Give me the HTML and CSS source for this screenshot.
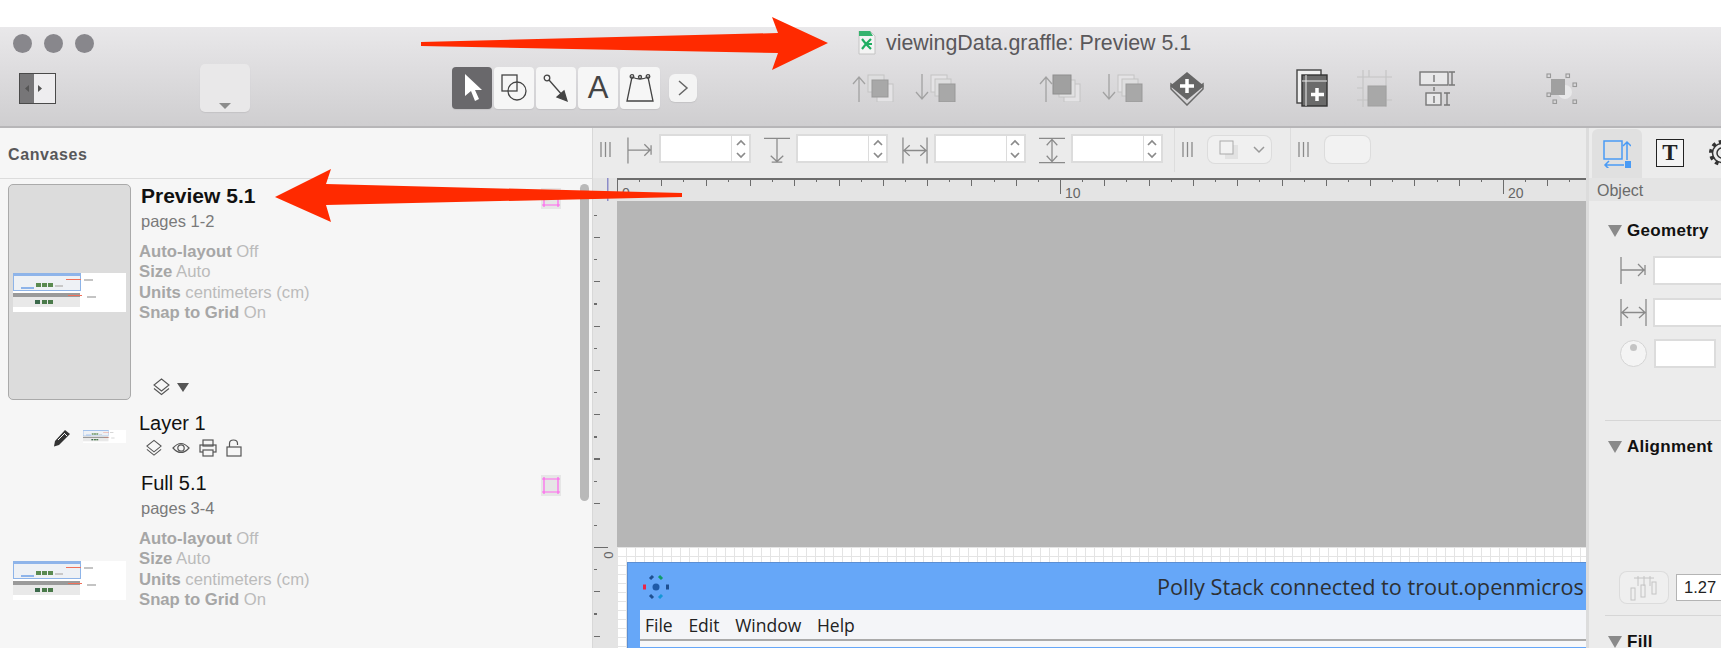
FILE: index.html
```html
<!DOCTYPE html>
<html lang="en">
<head>
  <meta charset="UTF-8">
  <title>viewingData.graffle: Preview 5.1</title>
  <link rel="stylesheet" href="styles.css">
</head>
<body>
  <!-- shared icons -->
  <svg class="defs" width="0" height="0">
    <symbol id="grip" viewBox="0 0 11 15">
      <path d="M1 0v15M5.500 0v15M10 0v15" stroke="#8a8a8a" stroke-width="1.300" fill="none"/>
    </symbol>
    <symbol id="step" viewBox="0 0 12 22">
      <path d="M2 7l4-4 4 4M2 15l4 4 4-4" stroke="#8a8a8a" stroke-width="1.700" fill="none"/>
    </symbol>
    <symbol id="x-pos" viewBox="0 0 27 27">
      <path d="M1 0v27M1 13h24M18 7l6 6-6 6M25 8v10" stroke="#8a8a8a" stroke-width="1.300" fill="none"/>
    </symbol>
    <symbol id="y-pos" viewBox="0 0 27 27">
      <path d="M0 1h27M13.500 1v24M7 19l6.500 6 6.500-6M8 25.500h11" stroke="#8a8a8a" stroke-width="1.300" fill="none"/>
    </symbol>
    <symbol id="width" viewBox="0 0 27 27">
      <path d="M1 0v27M26 0v27M2 13.500h23M8 8l-6 5.500 6 5.500M19 8l6 5.500-6 5.500" stroke="#8a8a8a" stroke-width="1.300" fill="none"/>
    </symbol>
    <symbol id="height" viewBox="0 0 27 27">
      <path d="M0 1h27M0 26h27M13.500 2v23M8 8l5.500-6 5.500 6M8 19l5.500 6 5.500-6" stroke="#8a8a8a" stroke-width="1.300" fill="none"/>
    </symbol>
    <symbol id="layers" viewBox="0 0 19 18">
      <path d="M9.500 1l7.500 6-7.500 6L2 7z" fill="none" stroke="#555" stroke-width="1.100"/>
      <path d="M2 10.500l7.500 6 7.500-6" fill="none" stroke="#555" stroke-width="1.100"/>
    </symbol>
    <symbol id="stack-up" viewBox="0 0 42 28">
      <path d="M7 28V4M1 10l6-7 6 7" stroke="#a2a2a2" stroke-width="1.300" fill="none"/>
      <rect x="25" y="10" width="16" height="18" fill="#e4e3e5" stroke="#c4c4c4"/>
      <rect x="16" y="1" width="16" height="17" fill="#dededf" stroke="#c4c4c4"/>
      <rect x="20" y="6" width="16" height="17" fill="#a8a8a8" stroke="#999"/>
    </symbol>
    <symbol id="stack-front" viewBox="0 0 42 28">
      <path d="M7 28V4M1 10l6-7 6 7" stroke="#a2a2a2" stroke-width="1.300" fill="none"/>
      <rect x="25" y="10" width="16" height="18" fill="#e4e3e5" stroke="#c4c4c4"/>
      <rect x="20" y="6" width="16" height="17" fill="#e0e0e1" stroke="#c4c4c4"/>
      <rect x="14" y="1" width="18" height="19" fill="#a0a0a0" stroke="#8e8e8e"/>
    </symbol>
    <symbol id="stack-down" viewBox="0 0 42 28">
      <path d="M7 0v24M1 18l6 7 6-7" stroke="#a2a2a2" stroke-width="1.300" fill="none"/>
      <rect x="16" y="1" width="16" height="17" fill="#e4e3e5" stroke="#c4c4c4"/>
      <rect x="20" y="5" width="16" height="17" fill="#dededf" stroke="#c4c4c4"/>
      <rect x="24" y="10" width="16" height="18" fill="#a8a8a8" stroke="#999"/>
    </symbol>
    <symbol id="mini-doc" viewBox="0 0 113 39">
      <rect width="113" height="39" fill="#fff"/>
      <rect x="0.500" y="0.500" width="67" height="17" fill="#eef1f5" stroke="#8eb4e8"/>
      <rect x="1" y="1" width="66" height="2" fill="#8eb4ea"/>
      <rect x="8" y="14" width="13" height="2" fill="#8eb4ea"/>
      <rect x="23" y="10" width="5" height="4" fill="#5a8a50"/>
      <rect x="29" y="10" width="5" height="4" fill="#5a8a50"/>
      <rect x="35" y="10" width="5" height="4" fill="#5a8a50"/>
      <rect x="42" y="12" width="8" height="2" fill="#c8c8c8"/>
      <rect x="53" y="6" width="15" height="1" fill="#f0705a"/>
      <rect x="71" y="6" width="9" height="2" fill="#c4c4c4"/>
      <rect x="0" y="20" width="67" height="4" fill="#9a9a9a"/>
      <rect x="0" y="24" width="67" height="10" fill="#e9e9e9"/>
      <rect x="22" y="27" width="5" height="4" fill="#3c6a4c"/>
      <rect x="29" y="27" width="5" height="4" fill="#4a7a4a"/>
      <rect x="35" y="27" width="5" height="4" fill="#4a7a4a"/>
      <rect x="55" y="22" width="14" height="1" fill="#f0705a"/>
      <rect x="74" y="23" width="9" height="2" fill="#c4c4c4"/>
    </symbol>
    <symbol id="pink" viewBox="0 0 20 21">
      <rect width="20" height="21" fill="#e6e6e6"/>
      <path d="M3 2v17M17 2v17M1 4h18M1 17h18" stroke="#ff66ee" stroke-width="1.200" fill="none"/>
    </symbol>
  </svg>

  <div class="page">
    <div class="top-gap"></div>

    <header class="toolbar">
      <div class="title-row">
        <div class="dots"><i></i><i></i><i></i></div>
        <div class="doc-title">
          <svg width="18" height="24" viewBox="0 0 18 24">
            <path d="M1 0h11l5 5v18H1z" fill="#f4f4f4" stroke="#c4c4c4"/>
            <path d="M1 0h11l3 5H1z" fill="#35b36e"/>
            <path d="M4 8l4 5-4 5M13 8l-5 5 5 5M8 13h6" stroke="#1fae62" stroke-width="2.200" fill="none"/>
          </svg>
          <span>viewingData.graffle: Preview 5.1</span>
        </div>
      </div>

      <div class="tool-row">
        <div class="side-toggle"><b></b>
          <svg width="37" height="31" viewBox="0 0 37 31"><path d="M10 12l-4 3.500 4 3.500zM19 12l4 3.500-4 3.500z" fill="#555"/></svg>
        </div>
        <div class="style-btn"><i></i></div>

        <div class="tools">
          <div class="tool active">
            <svg width="24" height="32" viewBox="0 0 24 32"><path d="M5 2v22l6-5 4 10 4-2-4-9h7z" fill="#fff"/></svg>
          </div>
          <div class="tool">
            <svg width="28" height="32" viewBox="0 0 28 32" fill="none" stroke="#444" stroke-width="1.300"><rect x="2" y="3" width="15" height="16"/><circle cx="17" cy="19" r="9"/></svg>
          </div>
          <div class="tool">
            <svg width="28" height="32" viewBox="0 0 28 32" fill="none" stroke="#444" stroke-width="1.300"><circle cx="5" cy="6" r="2.800"/><path d="M7 8l14 16"/><path d="M25 29l-10-4 7-6z" fill="#444"/></svg>
          </div>
          <div class="tool tool-a">A</div>
          <div class="tool">
            <svg width="30" height="32" viewBox="0 0 30 32" fill="none" stroke="#444" stroke-width="1.300"><path d="M7 5Q15 9 23 5L28 29H2z"/><circle cx="7" cy="4.500" r="1.800"/><circle cx="23" cy="4.500" r="1.800"/><circle cx="15" cy="5" r="1.500"/></svg>
          </div>
        </div>
        <div class="more-btn">
          <svg width="12" height="18" viewBox="0 0 12 18"><path d="M2 2l8 7-8 7" stroke="#666" stroke-width="1.500" fill="none"/></svg>
        </div>

        <svg class="order first" width="42" height="28"><use href="#stack-up"/></svg>
        <svg class="order second" width="42" height="28"><use href="#stack-down"/></svg>
        <svg class="order third" width="42" height="28"><use href="#stack-front"/></svg>
        <svg class="order second" width="42" height="28"><use href="#stack-down"/></svg>

        <svg class="group-btn" width="38" height="35" viewBox="0 0 38 35">
          <path d="M19 24l16-11v5L19 34 3 18v-5z" fill="none" stroke="#6a6a6a" stroke-width="1.500"/>
          <path d="M19 1l17 14-17 14L2 15z" fill="#666"/>
          <path d="M19 8v14M12 15h14" stroke="#fff" stroke-width="3.500"/>
        </svg>
        <svg class="new-canvas" width="32" height="38" viewBox="0 0 32 38">
          <rect x="1" y="1" width="24" height="33" fill="#f0f0f0" stroke="#444" stroke-width="1.400"/>
          <rect x="6" y="6" width="25" height="31" fill="#6b6b6b" stroke="#333" stroke-width="1.400"/>
          <path d="M6 12h25M10 6v31" stroke="#eee" stroke-width="1"/>
          <path d="M21 19v13M15 25.500h13" stroke="#fff" stroke-width="3.500"/>
        </svg>
        <svg class="grid-btn" width="37" height="37" viewBox="0 0 37 37">
          <path d="M1 7h35M1 30h35M7 0v37M30 0v37M1 18h6M13 0v7" stroke="#c4c4c4" stroke-width="1.100" fill="none"/>
          <rect x="12" y="16" width="18" height="20" fill="#a8a8a8" stroke="#a0a0a0"/>
        </svg>
        <svg class="split-btn" width="37" height="35" viewBox="0 0 37 35" fill="#e8e8e9" stroke="#777" stroke-width="1.400">
          <rect x="1" y="1" width="28" height="13"/>
          <rect x="7" y="22" width="15" height="12"/>
          <path d="M15 4v7M15 25v7M15 16v4M33 1v13M30 1h6M30 14h6M28 22v12M25 22h6M25 34h6" fill="none"/>
        </svg>
        <svg class="focus-btn" width="32" height="31" viewBox="0 0 32 31">
          <circle cx="19" cy="19" r="7" fill="#e8e8e9"/>
          <rect x="5" y="6" width="14" height="16" fill="#a0a0a0"/>
          <g fill="none" stroke="#999" stroke-width="1.100">
            <rect x="1" y="1" width="3.500" height="3.500"/><rect x="20" y="1" width="3.500" height="3.500"/>
            <rect x="27" y="10" width="3.500" height="3.500"/><rect x="1" y="20" width="3.500" height="3.500"/>
            <rect x="7" y="27" width="3.500" height="3.500"/><rect x="27" y="27" width="3.500" height="3.500"/>
          </g>
        </svg>
      </div>
    </header>

    <div class="main">
      <aside class="sidebar">
        <div class="side-head">Canvases</div>
        <div class="scroller"></div>
        <div class="side-list">

          <div class="canvas-item">
            <div class="thumb selected"><svg width="113" height="39"><use href="#mini-doc"/></svg></div>
            <div class="info">
              <div class="name strong">Preview 5.1</div>
              <div class="pages">pages 1-2</div>
              <ul class="props">
                <li><b>Auto-layout</b> Off</li>
                <li><b>Size</b> Auto</li>
                <li><b>Units</b> centimeters (cm)</li>
                <li><b>Snap to Grid</b> On</li>
              </ul>
              <div class="layer-toggle">
                <svg width="19" height="18"><use href="#layers"/></svg>
                <i class="caret"></i>
              </div>
            </div>
            <svg class="pink" width="20" height="21"><use href="#pink"/></svg>
          </div>

          <div class="layer-item">
            <svg class="pencil" width="18" height="18" viewBox="0 0 18 18">
              <path d="M12 1l5 4L6 16l-5 1.500L2 12z" fill="#333"/>
              <path d="M11 4l3 3M5 11l6-6" stroke="#f6f6f6" stroke-width="1"/>
            </svg>
            <svg class="layer-thumb" width="43" height="13" viewBox="0 0 113 39" preserveAspectRatio="none"><use href="#mini-doc"/></svg>
            <div class="info">
              <div class="name layer-name">Layer 1</div>
              <div class="layer-icons">
                <svg width="18" height="18"><use href="#layers"/></svg>
                <svg width="18" height="18" viewBox="0 0 18 18" fill="none" stroke="#555" stroke-width="1.200"><path d="M1 9q8-9 16 0-8 9-16 0z"/><circle cx="9" cy="9" r="3.200"/></svg>
                <svg width="18" height="18" viewBox="0 0 18 18" fill="none" stroke="#555" stroke-width="1.200"><rect x="4" y="1" width="10" height="6"/><rect x="1" y="6" width="16" height="7"/><rect x="4" y="11" width="10" height="6" fill="#f6f6f6"/></svg>
                <svg width="16" height="18" viewBox="0 0 16 18" fill="none" stroke="#555" stroke-width="1.200"><rect x="1" y="8" width="14" height="9"/><path d="M3.500 8V4.500q0-3.500 4-3.500t4 3.500V6"/></svg>
              </div>
            </div>
          </div>

          <div class="canvas-item next">
            <div class="thumb"><svg width="113" height="39"><use href="#mini-doc"/></svg></div>
            <div class="info">
              <div class="name">Full 5.1</div>
              <div class="pages">pages 3-4</div>
              <ul class="props">
                <li><b>Auto-layout</b> Off</li>
                <li><b>Size</b> Auto</li>
                <li><b>Units</b> centimeters (cm)</li>
                <li><b>Snap to Grid</b> On</li>
              </ul>
            </div>
            <svg class="pink" width="20" height="21"><use href="#pink"/></svg>
          </div>
        </div>
      </aside>

      <section class="center">
        <div class="insp-bar">
          <svg class="grip" width="11" height="15"><use href="#grip"/></svg>
          <div class="field-group">
            <svg width="26" height="27"><use href="#x-pos"/></svg>
            <div class="field"><span class="stepper"><svg width="12" height="22"><use href="#step"/></svg></span></div>
          </div>
          <div class="field-group">
            <svg width="26" height="27"><use href="#y-pos"/></svg>
            <div class="field"><span class="stepper"><svg width="12" height="22"><use href="#step"/></svg></span></div>
          </div>
          <div class="field-group">
            <svg width="26" height="27"><use href="#width"/></svg>
            <div class="field"><span class="stepper"><svg width="12" height="22"><use href="#step"/></svg></span></div>
          </div>
          <div class="field-group">
            <svg width="26" height="27"><use href="#height"/></svg>
            <div class="field"><span class="stepper"><svg width="12" height="22"><use href="#step"/></svg></span></div>
          </div>
          <div class="bar-sep"></div>
          <svg class="grip near" width="11" height="15"><use href="#grip"/></svg>
          <div class="shadow-select">
            <svg width="20" height="20" viewBox="0 0 20 20"><rect x="6" y="5" width="13" height="14" fill="#e2e2e2"/><rect x="1" y="1" width="13" height="13" fill="#f2f2f2" stroke="#aaa"/></svg>
            <svg width="12" height="8" viewBox="0 0 12 8"><path d="M1 1l5 5 5-5" stroke="#999" stroke-width="1.500" fill="none"/></svg>
          </div>
          <div class="bar-sep wide"></div>
          <svg class="grip near" width="11" height="15"><use href="#grip"/></svg>
          <div class="round-btn"></div>
        </div>

        <div class="h-ruler-row">
          <div class="ruler-corner"></div>
          <div class="h-ruler">
            <span>0</span><span>10</span><span>20</span>
          </div>
        </div>

        <div class="work">
          <div class="v-ruler">
            <div class="v-zero"><span>0</span></div>
          </div>
          <div class="sheet-col">
            <div class="backdrop"></div>
            <div class="sheet">
              <div class="app-window">
                <div class="app-head">
                  <svg width="28" height="26" viewBox="0 0 28 26">
                    <circle cx="14" cy="13" r="3.500" fill="#1f5aa8"/>
                    <path d="M2.500 10.500v5" stroke="#e8264a" stroke-width="3"/>
                    <path d="M25.500 10.500v5" stroke="#1f4f90" stroke-width="3"/>
                    <path d="M17 2l3 3" stroke="#0f9a68" stroke-width="3"/>
                    <path d="M11 2L8 5" stroke="#1f4f90" stroke-width="3"/>
                    <path d="M8 21l3 3" stroke="#1f4f90" stroke-width="3"/>
                    <path d="M20 21l-3 3" stroke="#1596d6" stroke-width="3"/>
                  </svg>
                  <span class="app-title">Polly Stack connected to trout.openmicros</span>
                </div>
                <nav class="app-menu">
                  <span>File</span><span>Edit</span><span>Window</span><span>Help</span>
                </nav>
                <div class="app-body"></div>
              </div>
            </div>
          </div>
        </div>
      </section>

      <aside class="inspector">
        <div class="tabs">
          <div class="tab active">
            <svg width="28" height="28" viewBox="0 0 28 28" fill="none" stroke="#4a9bf5" stroke-width="1.500">
              <rect x="1" y="1" width="18" height="18"/>
              <path d="M24 20V2M20 6l4-4 4 4M21 25H2M6 21l-4 4 4 4"/>
              <rect x="22" y="21" width="6" height="7" fill="#4a9bf5" stroke="none"/>
            </svg>
          </div>
          <div class="tab-t">T</div>
          <svg class="gear" width="28" height="28" viewBox="0 0 28 28" fill="none" stroke="#333">
            <circle cx="14" cy="14" r="11" stroke-width="4" stroke-dasharray="3.500 3.400"/>
            <circle cx="14" cy="14" r="9.500" stroke-width="1.500"/>
            <circle cx="14" cy="14" r="5" stroke-width="1.500"/>
          </svg>
        </div>
        <div class="insp-label">Object</div>

        <div class="insp-head geometry"><i class="tri"></i>Geometry</div>
        <div class="insp-row first-row">
          <svg width="27" height="27"><use href="#x-pos"/></svg>
          <div class="insp-field"></div>
        </div>
        <div class="insp-row">
          <svg width="27" height="27"><use href="#width"/></svg>
          <div class="insp-field"></div>
        </div>
        <div class="insp-row tight">
          <div class="knob"></div>
          <div class="insp-field short"></div>
        </div>
        <div class="insp-line after-geo"></div>

        <div class="insp-head"><i class="tri"></i>Alignment</div>
        <div class="insp-row spacing">
          <div class="space-btn">
            <svg width="30" height="26" viewBox="0 0 30 26" fill="none" stroke="#c4c4c4"><path d="M5 3h20M9 1v10M15 1v10M21 1v10"/><rect x="2" y="13" width="4" height="12"/><rect x="12" y="10" width="4" height="12"/><rect x="23" y="7" width="4" height="12"/></svg>
          </div>
          <div class="insp-field value">1.27</div>
        </div>
        <div class="insp-line"></div>

        <div class="insp-head"><i class="tri"></i>Fill</div>
      </aside>
    </div>

    <!-- red annotation arrows drawn over the window -->
    <svg class="arrows" width="1721" height="648" viewBox="0 0 1721 648">
      <path d="M421 42L778 33L772 17L828 43L772 70L778 53L421 46z" fill="#ff2a00"/>
      <path d="M682 193L326 184L331 169L275 197L331 222L326 205L682 197z" fill="#ff2a00"/>
    </svg>
  </div>
</body>
</html>
```

FILE: styles.css
```css
* {
  box-sizing: border-box;
}

body {
  margin: 0;
  background: #fff;
  font-family: "Liberation Sans", Arial, sans-serif;
  color: #333;
}

.defs {
  position: absolute;
}

svg {
  display: block;
  flex: none;
}

.page {
  position: relative;
  width: 1721px;
  height: 648px;
  overflow: hidden;
}

.top-gap {
  height: 27px;
}

/* title bar and toolbar */
.toolbar {
  height: 101px;
  background: linear-gradient(#e9e8ea, #cfced0);
  border-bottom: 2px solid #b7b6b8;
}

.title-row {
  display: flex;
  align-items: center;
  height: 32px;
  padding-left: 12.5px;
}

.dots {
  display: flex;
  gap: 12px;
}

.dots i {
  width: 19px;
  height: 19px;
  border-radius: 50%;
  background: #88878c;
}

.doc-title {
  display: flex;
  align-items: center;
  gap: 10px;
  margin-left: 764.5px;
  font-size: 21.400px;
  color: #5a585b;
}

.tool-row {
  display: flex;
  align-items: center;
  height: 48px;
  margin-top: 5px;
  padding-left: 19px;
}

.side-toggle {
  position: relative;
  display: flex;
  width: 37px;
  height: 31px;
  border: 1px solid #4a4a4a;
  background: #eeedef;
}

.side-toggle b {
  width: 14px;
  background: #777678;
}

.side-toggle svg {
  position: absolute;
  left: -1px;
  top: -1px;
}

.style-btn {
  position: relative;
  width: 50px;
  height: 48px;
  margin-left: 144px;
  border-radius: 5px;
  background: #e9e8e9;
  box-shadow: 0 1px 1px #c4c3c5;
}

.style-btn i {
  position: absolute;
  left: 19px;
  bottom: 3px;
  border-left: 6px solid transparent;
  border-right: 6px solid transparent;
  border-top: 6px solid #8c8c8c;
}

.tools {
  display: flex;
  gap: 2px;
  margin-left: 202px;
}

.tool {
  display: flex;
  align-items: center;
  justify-content: center;
  width: 40px;
  height: 42px;
  border-radius: 4px;
  background: #f6f6f6;
  box-shadow: 0 1px 1px #c4c3c5;
}

.tool.active {
  background: #69686b;
}

.tool-a {
  font-size: 31px;
  color: #444;
}

.more-btn {
  display: flex;
  align-items: center;
  justify-content: center;
  width: 28px;
  height: 28px;
  margin-left: 9px;
  border-radius: 6px;
  background: #f4f4f4;
  box-shadow: 0 1px 1px #c4c3c5;
}

.order.first {
  margin-left: 155px;
}

.order.second {
  margin-left: 21px;
}

.order.third {
  margin-left: 82px;
}

.group-btn {
  margin-left: 24px;
}

.new-canvas {
  margin-left: 90px;
}

.grid-btn {
  margin-left: 28px;
}

.split-btn {
  margin-left: 26px;
}

.focus-btn {
  margin-left: 90px;
}

/* window body */
.main {
  display: flex;
  height: 520px;
}

.sidebar {
  position: relative;
  flex: none;
  width: 593px;
  background: #f6f6f6;
  border-right: 1px solid #d8d8d8;
}

.side-head {
  display: flex;
  align-items: center;
  height: 51px;
  padding: 4px 0 0 8px;
  border-bottom: 1px solid #dcdcdc;
  font-size: 16px;
  font-weight: bold;
  letter-spacing: 0.6px;
  color: #58585a;
}

.scroller {
  position: absolute;
  left: 580px;
  top: 56px;
  width: 9px;
  height: 317px;
  border-radius: 5px;
  background: #b9b9b9;
}

.side-list {
  padding: 5px 31px 0 8px;
}

.canvas-item {
  display: flex;
}

.canvas-item.next {
  margin-top: 14px;
}

.thumb {
  display: flex;
  align-items: center;
  justify-content: center;
  width: 123px;
  height: 216px;
  margin-right: 8px;
  border-radius: 5px;
}

.canvas-item.next .thumb {
  height: 218px;
}

.thumb.selected {
  background: #dcdcdc;
  border: 1px solid #aaa;
}

.info {
  flex: 1;
}

.name {
  height: 24px;
  padding-left: 2px;
  font-size: 20px;
  line-height: 24px;
  color: #111;
}

.name.strong {
  font-size: 21px;
  font-weight: bold;
}

.name.layer-name {
  padding-left: 0;
}

.pages {
  margin-top: 2px;
  padding-left: 2px;
  font-size: 16.500px;
  line-height: 22px;
  color: #7a7a7a;
}

.props {
  margin: 10px 0 0;
  padding: 0;
  list-style: none;
  font-size: 16.700px;
  line-height: 20.300px;
  color: #bbb;
}

.props b {
  color: #a6a6a6;
}

.layer-toggle {
  display: flex;
  align-items: center;
  gap: 6px;
  margin: 55px 0 0 13px;
}

.caret {
  border-left: 6px solid transparent;
  border-right: 6px solid transparent;
  border-top: 9px solid #555;
}

.pink {
  margin-top: 4px;
}

.layer-item {
  display: flex;
  margin-top: 11px;
  padding-left: 45px;
}

.pencil {
  margin-top: 18px;
}

.layer-thumb {
  margin: 19px 13px 0 12px;
}

.layer-icons {
  display: flex;
  gap: 9px;
  margin: 4px 0 0 6px;
}

/* inspector strip above the canvas */
.center {
  display: flex;
  flex-direction: column;
  flex: none;
  width: 993px;
}

.insp-bar {
  display: flex;
  flex: none;
  align-items: flex-start;
  height: 50px;
  padding: 6px 0 0 7px;
  background: #ebebeb;
}

.grip {
  margin-top: 8px;
}

.grip.near {
  margin-left: 7px;
}

.field-group {
  display: flex;
  flex: none;
  gap: 6px;
  width: 137.300px;
}

.grip + .field-group {
  margin-left: 16px;
}

.field-group svg {
  margin-top: 3px;
}

.field {
  display: flex;
  flex: none;
  justify-content: flex-end;
  width: 92px;
  height: 29px;
  background: #fff;
  border: 2px solid #dcdcdc;
}

.stepper {
  display: flex;
  align-items: center;
  justify-content: center;
  width: 18px;
  border-left: 1px solid #dcdcdc;
}

.stepper svg {
  margin-top: 0;
}

.bar-sep {
  flex: none;
  width: 1px;
  height: 44px;
  margin: -6px 0 0 -2px;
  background: #dddddd;
}

.bar-sep.wide {
  margin-left: 19px;
}

.shadow-select {
  display: flex;
  flex: none;
  align-items: center;
  justify-content: space-between;
  width: 63px;
  height: 27px;
  margin: 2px 0 0 15px;
  padding: 0 6px 0 11px;
  border-radius: 7px;
  background: #f0f0f0;
  box-shadow: 0 0 0 1px #dcdcdc;
}

.round-btn {
  flex: none;
  width: 45px;
  height: 27px;
  margin: 2px 0 0 16px;
  border-radius: 7px;
  background: #f2f2f2;
  box-shadow: 0 0 0 1px #dcdcdc;
}

/* rulers */
.h-ruler-row {
  display: flex;
  flex: none;
  height: 23px;
  background: #e4e4e4;
}

.ruler-corner {
  flex: none;
  width: 24px;
  background: linear-gradient(#8c8cc8, #8c8cc8) 14px 0 / 1.500px 100% no-repeat;
}

.h-ruler {
  display: flex;
  flex: 1;
  min-width: 0;
  overflow: hidden;
  border-top: 2px solid #6c6c6c;
  background:
    repeating-linear-gradient(90deg, #6c6c6c 0 1px, transparent 1px 44.300px) 0 0 / 100% 6px no-repeat,
    repeating-linear-gradient(90deg, #6c6c6c 0 1px, transparent 1px 22.150px) 0 0 / 100% 2px no-repeat;
}

.h-ruler span {
  flex: none;
  width: 443px;
  height: 14px;
  padding: 6px 0 0 4px;
  border-left: 1.500px solid #6c6c6c;
  font-size: 14px;
  line-height: 14px;
  color: #666;
}

.work {
  display: flex;
  flex: 1;
  min-height: 0;
}

.v-ruler {
  flex: none;
  width: 24px;
  background:
    repeating-linear-gradient(180deg, transparent 0 35.900px, #6c6c6c 35.900px 37px, transparent 37px 44.300px) 1px 0 / 6px 100% no-repeat,
    repeating-linear-gradient(180deg, transparent 0 13.750px, #6c6c6c 13.750px 15px, transparent 15px 44.300px) 1px 0 / 3px 100% no-repeat,
    #e4e4e4;
}

.v-zero {
  height: 16px;
  margin: 346px 0 0 1px;
  width: 14px;
  border-top: 1.500px solid #6c6c6c;
  font-size: 13px;
  line-height: 13px;
  color: #666;
}

.v-zero span {
  display: block;
  transform: translate(10px, 1px) rotate(90deg);
  width: 8px;
}

.sheet-col {
  display: flex;
  flex-direction: column;
  flex: 1;
  min-width: 0;
}

.backdrop {
  flex: none;
  height: 346px;
  background: #b6b6b6;
}

.sheet {
  flex: 1;
  min-height: 0;
  overflow: hidden;
  padding: 15px 0 0 10px;
  background:
    repeating-linear-gradient(90deg, #e4e4e4 0 1px, transparent 1px 9px),
    repeating-linear-gradient(180deg, #e4e4e4 0 1px, transparent 1px 9px),
    #fff;
}

.app-window {
  height: 100%;
  padding-left: 12px;
  background: #66a7f8;
  border-top: 1px solid #5b8fd4;
  border-left: 1px solid #5b8fd4;
}

.app-head {
  display: flex;
  align-items: center;
  height: 47px;
  margin-left: -12px;
  padding-left: 14px;
  white-space: nowrap;
  overflow: hidden;
}

.app-title {
  margin-left: 487px;
  font-family: "Open Sans", sans-serif;
  font-size: 21.700px;
  color: #2d3033;
}

.app-menu {
  display: flex;
  gap: 15.700px;
  height: 31px;
  padding: 3px 0 0 5px;
  background: #f4f5f8;
  border-bottom: 2px solid #aaa;
  font-family: "Open Sans", sans-serif;
  font-size: 17.500px;
  color: #222;
}

.app-body {
  height: 6px;
  background: #f7f8fa;
}

/* right panel */
.inspector {
  flex: 1;
  min-width: 0;
  overflow: hidden;
  background: #ececec;
  border-left: 3px solid #dcdcdc;
}

.tabs {
  display: flex;
  align-items: center;
  height: 50px;
  padding-left: 3px;
}

.tab.active {
  display: flex;
  flex: none;
  align-items: center;
  justify-content: center;
  width: 50px;
  height: 49px;
  margin-top: 1px;
  border-radius: 6px 6px 0 0;
  background: #e0e0e0;
}

.tab-t {
  flex: none;
  width: 28px;
  height: 28px;
  margin-left: 14px;
  border: 1.500px solid #222;
  background: #f4f4f4;
  font-family: "Liberation Serif", serif;
  font-size: 23px;
  font-weight: bold;
  line-height: 25px;
  text-align: center;
  color: #222;
}

.gear {
  margin-left: 24px;
}

.insp-label {
  height: 23px;
  padding-left: 8px;
  background: #e4e4e4;
  font-size: 16px;
  line-height: 25px;
  color: #6a6a6a;
}

.insp-head {
  display: flex;
  align-items: center;
  height: 20px;
  margin-top: 16px;
  padding-left: 19px;
  font-size: 17px;
  font-weight: bold;
  letter-spacing: 0.300px;
  color: #111;
}

.insp-head.geometry {
  margin-top: 20px;
}

.tri {
  margin-right: 5px;
  border-left: 7px solid transparent;
  border-right: 7px solid transparent;
  border-top: 12px solid #8a8a8a;
}

.insp-row {
  display: flex;
  align-items: center;
  gap: 6px;
  height: 29px;
  margin-top: 13px;
  padding-left: 31px;
}

.first-row {
  margin-top: 15px;
}

.insp-row.tight {
  margin-top: 12px;
  gap: 7px;
}

.insp-field {
  flex: none;
  width: 80px;
  height: 29px;
  background: #fff;
  border: 2px solid #dcdcdc;
}

.insp-field.short {
  width: 62px;
}

.knob {
  flex: none;
  position: relative;
  width: 27px;
  height: 27px;
  border-radius: 50%;
  background: #f4f4f4;
  border: 1px solid #d4d4d4;
}

.knob::after {
  content: "";
  position: absolute;
  left: 9px;
  top: 3px;
  width: 7px;
  height: 7px;
  border-radius: 50%;
  background: #c4c4c4;
}

.insp-line {
  height: 1px;
  margin: 12px 0 0 16px;
  background: #d6d6d6;
}

.insp-line.after-geo {
  margin-top: 52px;
}

.insp-row.spacing {
  height: 31px;
  margin-top: 115px;
  gap: 8px;
}

.space-btn {
  display: flex;
  align-items: center;
  justify-content: center;
  flex: none;
  width: 48px;
  height: 31px;
  border-radius: 7px;
  background: #efefef;
  box-shadow: 0 0 0 1px #dcdcdc;
}

.insp-field.value {
  height: 27px;
  padding-left: 7px;
  border: 1px solid #b4b4b4;
  font-size: 16.500px;
  line-height: 25px;
  color: #222;
}

.arrows {
  position: absolute;
  left: 0;
  top: 0;
  pointer-events: none;
}
```
